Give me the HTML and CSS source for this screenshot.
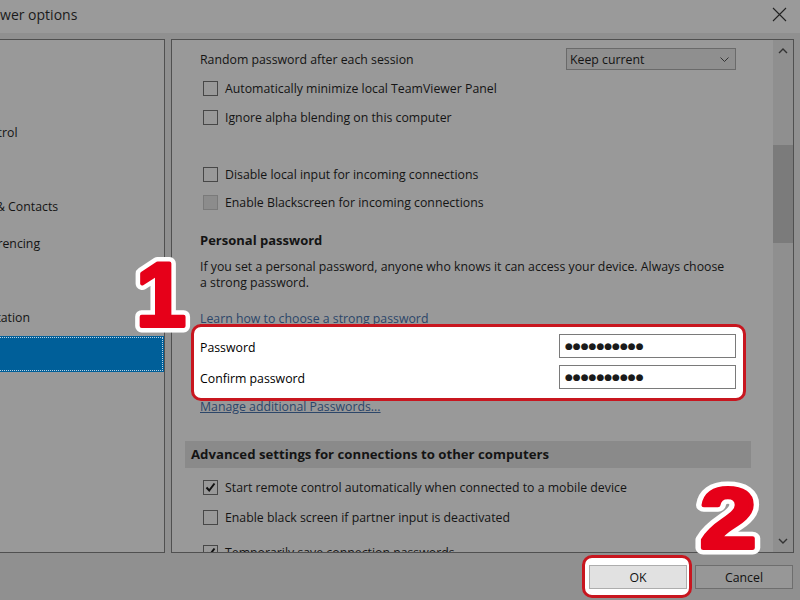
FILE: index.html
```html
<!DOCTYPE html>
<html lang="en">
<head>
    <meta charset="UTF-8">
    <title>TeamViewer options</title>
    <link rel="stylesheet" href="styles.css">
</head>
<body>
    <div class="window">
        <div class="titlebar">
            <span class="title">TeamViewer options</span>
            <svg class="close" viewBox="0 0 15 15"><path d="M1 1L14 14M14 1L1 14"/></svg>
        </div>

        <div class="main">
            <ul class="nav">
                <li>General</li>
                <li>Security</li>
                <li>Remote control</li>
                <li>Meeting</li>
                <li>Computers &amp; Contacts</li>
                <li>Audio conferencing</li>
                <li>Video</li>
                <li>Custom invitation</li>
                <li class="active">Advanced</li>
            </ul>

            <div class="panel">
                <div class="content">
                    <div class="setting">
                        <span>Random password after each session</span>
                        <div class="select">
                            <span>Keep current</span>
                            <svg class="chevron" viewBox="0 0 9 5"><path d="M0.5 0.5L4.5 4.5L8.5 0.5"/></svg>
                        </div>
                    </div>
                    <label class="check mt-4"><span class="box"></span>Automatically minimize local TeamViewer Panel</label>
                    <label class="check mt-1"><span class="box"></span>Ignore alpha blending on this computer</label>

                    <label class="check mt-29"><span class="box"></span>Disable local input for incoming connections</label>
                    <label class="check"><span class="box disabled"></span>Enable Blackscreen for incoming connections</label>

                    <h3 class="heading">Personal password</h3>
                    <p class="note">If you set a personal password, anyone who knows it can access your device. Always choose a strong password.</p>
                    <div class="link-row mt-20"><a href="#">Learn how to choose a strong password</a></div>

                    <div class="pw-group">
                        <div class="pw-row">
                            <span>Password</span>
                            <div class="pw-input">●●●●●●●●●●</div>
                        </div>
                        <div class="pw-row">
                            <span>Confirm password</span>
                            <div class="pw-input">●●●●●●●●●●</div>
                        </div>
                    </div>
                    <div class="link-row mt-n2"><a href="#">Manage additional Passwords...</a></div>

                    <div class="section-head">Advanced settings for connections to other computers</div>
                    <label class="check mt-5"><span class="box"><svg viewBox="0 0 13 13"><path d="M2.5 6.5L5.2 9.5L10.5 2.5"/></svg></span>Start remote control automatically when connected to a mobile device</label>
                    <label class="check mt-2"><span class="box"></span>Enable black screen if partner input is deactivated</label>
                    <label class="check mt-7"><span class="box"><svg viewBox="0 0 13 13"><path d="M2.5 6.5L5.2 9.5L10.5 2.5"/></svg></span>Temporarily save connection passwords</label>
                </div>

                <div class="scrollbar">
                    <svg class="arrow" viewBox="0 0 10 6"><path d="M1 5L5 1L9 5"/></svg>
                    <div class="track"><div class="thumb"></div></div>
                    <svg class="arrow" viewBox="0 0 10 6"><path d="M1 1L5 5L9 1"/></svg>
                </div>
            </div>
        </div>

        <div class="footer">
            <div class="mark"><button class="btn ok">OK</button></div>
            <button class="btn cancel">Cancel</button>
        </div>
    </div>

    <!-- annotation digits -->
    <svg class="num num-1" viewBox="0 0 80 100">
        <text x="41" y="86" class="outline">1</text>
        <text x="41" y="86" class="fill">1</text>
    </svg>
    <svg class="num num-2" viewBox="0 0 100 95">
        <g transform="translate(50 0) scale(1.2 1)">
            <text x="0" y="78" class="outline">2</text>
            <text x="0" y="78" class="fill">2</text>
        </g>
    </svg>
</body>
</html>
```

FILE: styles.css
```css
body {
    margin: 0;
    width: 800px;
    height: 600px;
    overflow: hidden;
    position: relative;
    background: #909090;
    font-family: "Open Sans", "Segoe UI", sans-serif;
    font-size: 12.3px;
    color: #141414;
}

.window {
    margin-left: -80px;
    width: 880px;
}

.titlebar {
    height: 33px;
    box-sizing: border-box;
    padding: 0 13px 4px 24px;
    display: flex;
    align-items: center;
    justify-content: space-between;
    background: #9a9a9a;
}

.title {
    font-size: 14px;
    color: #1a1a1a;
}

.close {
    width: 15px;
    height: 15px;
    fill: none;
    stroke: #222;
    stroke-width: 1.1;
}

.main {
    display: flex;
    gap: 6px;
    height: 514px;
    margin-top: 6px;
}

.nav {
    width: 245px;
    box-sizing: border-box;
    margin: 0;
    padding: 0;
    list-style: none;
    border: 1px solid #505050;
    background: #999;
    overflow: hidden;
}

.nav li {
    height: 37px;
    line-height: 38px;
    padding-left: 8px;
    white-space: nowrap;
}

.nav li.active {
    height: 36px;
    line-height: 36px;
    background: #005f99;
    color: #fff;
    outline: 1px dotted #bcd3e4;
    outline-offset: -2px;
}

.panel {
    width: 623px;
    box-sizing: border-box;
    display: flex;
    border: 1px solid #505050;
    background: #999;
    overflow: hidden;
}

.content {
    flex: 1;
    padding: 0 37px 0 28px;
    white-space: nowrap;
}

.setting {
    display: flex;
    align-items: center;
    justify-content: space-between;
    height: 22px;
    margin-top: 8px;
}

.select {
    width: 170px;
    height: 22px;
    box-sizing: border-box;
    display: flex;
    align-items: center;
    justify-content: space-between;
    padding: 0 6px 0 3px;
    border: 1px solid #6a6a6a;
    background: #8f8f8f;
}

.chevron {
    width: 9px;
    height: 5px;
    fill: none;
    stroke: #333;
    stroke-width: 1;
}

.check {
    display: flex;
    align-items: center;
    height: 28px;
}

.box {
    width: 15px;
    height: 15px;
    box-sizing: border-box;
    margin: 0 7px 0 3px;
    border: 1px solid #474747;
    background: #999;
    display: flex;
}

.box.disabled {
    background: #8c8c8c;
    border-color: #7a7a7a;
}

.box svg {
    width: 13px;
    height: 13px;
    fill: none;
    stroke: #111;
    stroke-width: 2;
}

.mt-1 { margin-top: 1px; }
.mt-2 { margin-top: 2px; }
.mt-4 { margin-top: 4px; }
.mt-5 { margin-top: 5px; }
.mt-7 { margin-top: 7px; }
.mt-20 { margin-top: 20px; }
.mt-29 { margin-top: 29px; }
.mt-n2 { margin-top: -2px; }

.heading {
    margin: 14px 0 0;
    font-size: 13px;
    font-weight: 700;
    line-height: 20px;
}

.note {
    width: 530px;
    margin: 9px 0 0;
    line-height: 16px;
    white-space: normal;
}

.link-row {
    line-height: 16px;
}

.link-row a {
    color: #2c4669;
}

.pw-group {
    margin: -3px -10px 0 -9px;
    padding: 7px 7px 9px 6px;
    display: flex;
    flex-direction: column;
    gap: 7px;
    border: 3px solid #c8161f;
    border-radius: 10px;
    background: #fff;
    color: #000;
    position: relative;
}

.pw-row {
    display: flex;
    align-items: center;
    justify-content: space-between;
}

.pw-row span {
    padding-top: 2px;
}

.pw-input {
    width: 177px;
    height: 24px;
    box-sizing: border-box;
    padding-left: 5px;
    border: 1px solid #7a7a7a;
    font-family: "DejaVu Sans", sans-serif;
    font-size: 9px;
    line-height: 22px;
    color: #1a1a1a;
}

.section-head {
    margin: 26px -15px 0;
    height: 27px;
    line-height: 27px;
    padding-left: 6px;
    background: #8a8a8a;
    font-size: 13.2px;
    font-weight: 700;
}

.scrollbar {
    width: 20px;
    display: flex;
    flex-direction: column;
    align-items: center;
    background: #8f8f8f;
}

.arrow {
    width: 10px;
    height: 6px;
    margin: 8px 0;
    fill: none;
    stroke: #333;
    stroke-width: 1.4;
}

.track {
    flex: 1;
    align-self: stretch;
}

.thumb {
    height: 98px;
    margin-top: 83px;
    background: #7b7b7b;
}

.footer {
    height: 47px;
    box-sizing: border-box;
    display: flex;
    justify-content: flex-end;
    align-items: flex-start;
    padding: 12px 7px 0 0;
}

.mark {
    margin-top: -10px;
    padding: 7px 2px 6px 4px;
    border: 3px solid #c8161f;
    border-radius: 10px;
    background: #fff;
    display: flex;
}

.btn {
    width: 98px;
    height: 24px;
    padding: 0;
    font-family: "Open Sans", "Segoe UI", sans-serif;
    font-size: 12.3px;
    color: #111;
    border: 1px solid #6e6e6e;
    background: #979797;
}

.btn.ok {
    background: #e1e1e1;
    border-color: #adadad;
}

.btn.cancel {
    margin-left: 3px;
}

.num {
    position: absolute;
    font-family: "Liberation Sans", Arial, sans-serif;
    font-weight: 700;
    text-anchor: middle;
}

.num-1 {
    left: 120px;
    top: 240px;
    width: 80px;
    height: 100px;
    font-size: 90px;
}

.num-2 {
    left: 678px;
    top: 470px;
    width: 100px;
    height: 95px;
    font-size: 85px;
}

.num .outline {
    fill: #fff;
    stroke: #fff;
    stroke-width: 13;
    stroke-linejoin: round;
}

.num .fill {
    fill: #e60019;
    stroke: #e60019;
    stroke-width: 4;
    stroke-linejoin: round;
}
```
